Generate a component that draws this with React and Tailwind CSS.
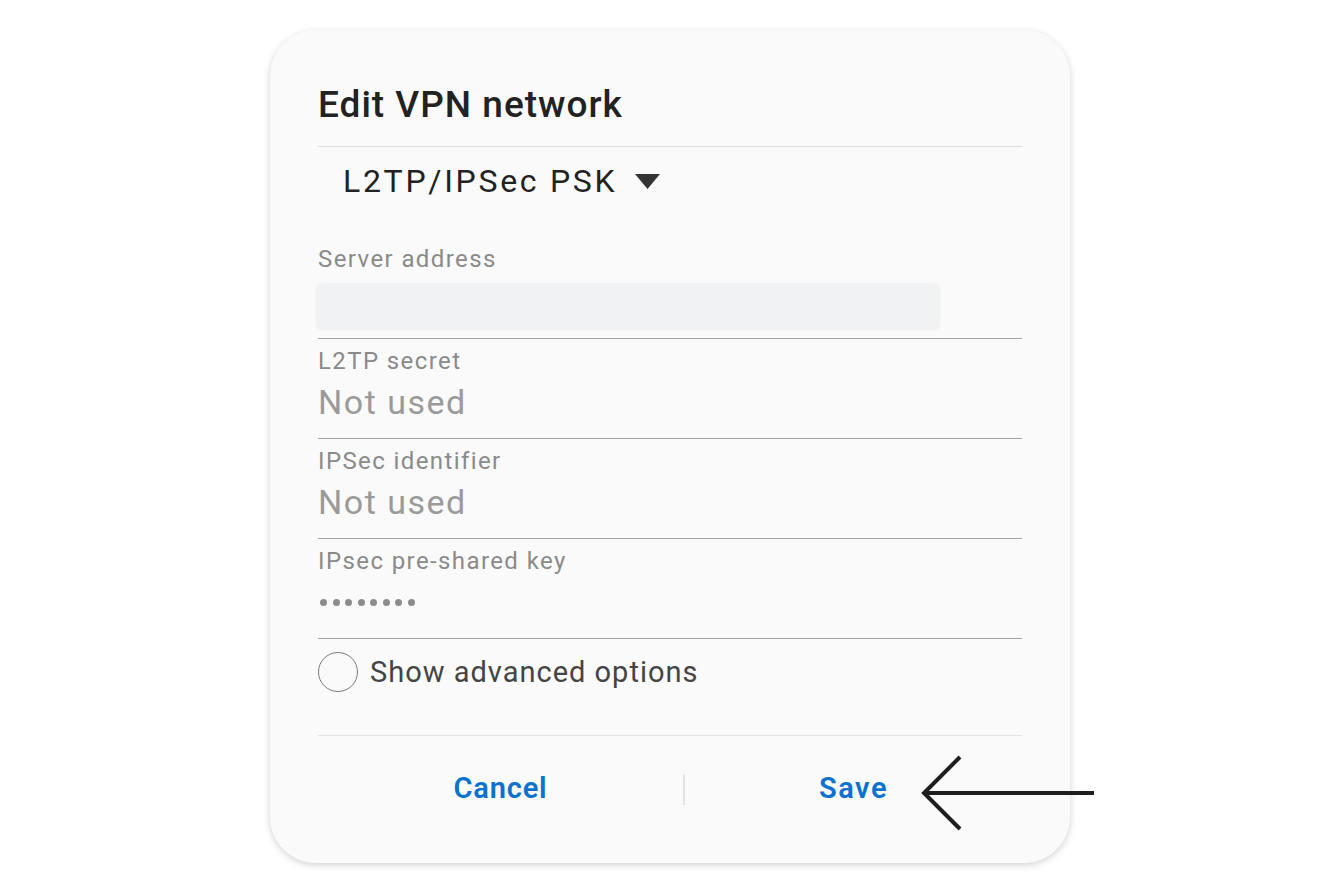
import React from 'react';

const font = { fontFamily: "Roboto, 'Noto Sans', sans-serif" };

function Field({ label, value, dots }) {
  return (
    <div className="h-[100px] pt-[8px] border-b border-[#a3a3a3]">
      <div className="text-[24px] leading-[28px] tracking-[1.4px] text-[#8a8a8a]">{label}</div>
      {dots ? (
        <div className="mt-[24px] flex gap-[5.5px] pl-[2px]">
          {Array.from({ length: 8 }).map((_, i) => (
            <span key={i} className="block w-[7px] h-[7px] rounded-full bg-[#8c8c8c]" />
          ))}
        </div>
      ) : (
        <div className="mt-[7px] text-[34px] leading-[40px] tracking-[1.5px] text-[#9a9a9a]">{value}</div>
      )}
    </div>
  );
}

export default function App() {
  return (
    <div className="relative w-[1340px] h-[894px] bg-white overflow-hidden" style={font}>
      <div className="mx-auto mt-[30px] w-[800px] h-[833px] rounded-[46px] bg-[#fafafa] px-[48px] shadow-[0_2px_7px_rgba(0,0,0,0.18)]">
        {/* title */}
        <div className="h-[117px] pt-[55px] border-b border-[#dcdcdc]">
          <h1 className="text-[37px] leading-[40px] font-medium tracking-[1px] text-[#222]">Edit VPN network</h1>
        </div>

        {/* vpn type */}
        <div className="h-[98px] pt-[14px] pl-[25px]">
          <div className="flex items-center gap-[18px] text-[32px] leading-[40px] text-[#222]">
            <span className="tracking-[2.7px]">L2TP/IPSec PSK</span>
            <svg width="25" height="15" viewBox="0 0 25 15">
              <path d="M0 0H25L12.5 15Z" fill="#333" />
            </svg>
          </div>
        </div>

        {/* server address */}
        <div className="border-b border-[#a3a3a3] pb-[8px]">
          <div className="text-[24px] leading-[28px] tracking-[1.4px] text-[#8a8a8a]">Server address</div>
          <div className="mt-[10px] -ml-[2px] w-[624px] h-[47px] rounded-md bg-[#f1f2f3] shadow-[0_0_3px_#f1f2f3]" />
        </div>

        <Field label="L2TP secret" value="Not used" />
        <Field label="IPSec identifier" value="Not used" />
        <Field label="IPsec pre-shared key" dots />

        {/* advanced */}
        <div className="h-[97px] border-b border-[#e3e3e3] pt-[13px]">
          <div className="flex items-center gap-[12px]">
            <span className="block w-[40px] h-[40px] rounded-full border-[1.5px] border-[#7a7a7a]" />
            <span className="text-[29px] leading-[40px] tracking-[1px] text-[#444]">Show advanced options</span>
          </div>
        </div>

        {/* buttons */}
        <div className="flex h-[106px] items-center">
          <button className="w-[365px] text-center text-[29px] font-semibold tracking-[0.8px] text-[#0b72cf]">Cancel</button>
          <span className="block w-[2px] h-[31px] bg-[#e4e4e4]" />
          <button className="flex-1 text-center text-[29px] font-semibold tracking-[1.5px] text-[#0b72cf]">Save</button>
        </div>
      </div>

      {/* annotation arrow */}
      <svg className="absolute left-0 top-0" width="1340" height="894">
        <path d="M1094 793H924M960 757L924 793L960 829" fill="none" stroke="#1e1e1e" strokeWidth="4" />
      </svg>
    </div>
  );
}
